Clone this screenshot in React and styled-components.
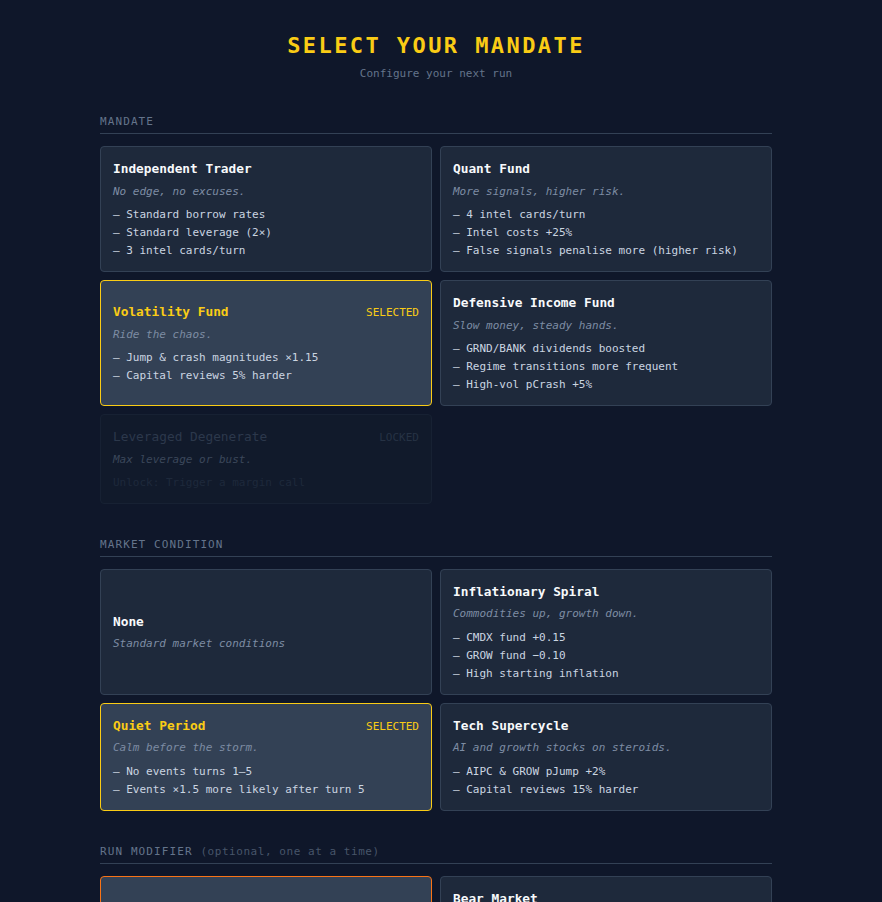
import React, { useState } from 'react';
import styled, { createGlobalStyle, css } from 'styled-components';

const GlobalStyle = createGlobalStyle`
  html, body {
    margin: 0;
    padding: 0;
    background-color: #0f172a;
  }
  body {
    font-family: "DejaVu Sans Mono", "Liberation Mono", monospace;
    color: #e2e8f0;
  }
`;

// the reference leaves a 10px gutter on the right (scrollbar track)
const Shell = styled.div`
  padding-right: 10px;
`;

const Page = styled.div`
  max-width: 672px;
  margin: 0 auto;
  padding: 33px 0 40px;
`;

const Header = styled.header`
  text-align: center;
  margin-bottom: 32px;
`;

const Title = styled.h1`
  margin: 0;
  font-size: 22px;
  line-height: 26px;
  font-weight: bold;
  letter-spacing: 0.11em;
  color: #facc15;
`;

const Subtitle = styled.p`
  margin: 6px 0 0;
  font-size: 11px;
  line-height: 17px;
  color: #64748b;
`;

const Section = styled.section`
  margin-bottom: 33px;
`;

const SectionLabel = styled.h2`
  margin: 0 0 12px;
  padding-bottom: 3px;
  border-bottom: 1px solid #334155;
  font-size: 11px;
  line-height: 16px;
  font-weight: normal;
  letter-spacing: 0.1em;
  color: #64748b;
`;

const Hint = styled.span`
  color: #475569;
  letter-spacing: 0.05em;
`;

const Grid = styled.div`
  display: grid;
  grid-template-columns: 1fr 1fr;
  gap: 8px;
`;

const accents = {
  yellow: '#facc15',
  orange: '#f97316',
};

const Card = styled.div`
  display: flex;
  flex-direction: column;
  justify-content: center;
  padding: 13px 12px 11px;
  border-radius: 4px;
  border: 1px solid #334155;
  background-color: #1e293b;
  cursor: pointer;

  ${(p) =>
    p.$selected &&
    css`
      background-color: #334155;
      border-color: ${accents[p.$accent]};
    `}

  ${(p) =>
    p.$locked &&
    css`
      background-color: #111a2b;
      border-color: #172133;
      cursor: default;
    `}
`;

const CardHead = styled.div`
  display: flex;
  justify-content: space-between;
  align-items: center;
`;

const CardTitle = styled.div`
  font-size: 12.8px;
  line-height: 18.5px;
  font-weight: bold;
  color: ${(p) => (p.$selected ? accents[p.$accent] : '#f8fafc')};

  ${(p) =>
    p.$locked &&
    css`
      font-weight: normal;
      color: #2c384b;
    `}
`;

const Tag = styled.span`
  font-size: 11px;
  color: ${(p) => (p.$locked ? '#263244' : accents[p.$accent])};
`;

const CardDesc = styled.div`
  margin-top: 4px;
  font-size: 11px;
  line-height: 17.6px;
  font-style: italic;
  color: ${(p) => (p.$locked ? '#3b475a' : '#7d8ca3')};
`;

const Perks = styled.ul`
  list-style: none;
  margin: 6px 0 0;
  padding: 0;
`;

const Perk = styled.li`
  font-size: 11px;
  line-height: 18px;
  color: #cbd5e1;
`;

const Unlock = styled.div`
  margin-top: 6px;
  font-size: 11px;
  line-height: 17.6px;
  color: #1e293b;
`;

const mandates = [
  {
    id: 'independent',
    name: 'Independent Trader',
    desc: 'No edge, no excuses.',
    perks: ['Standard borrow rates', 'Standard leverage (2×)', '3 intel cards/turn'],
  },
  {
    id: 'quant',
    name: 'Quant Fund',
    desc: 'More signals, higher risk.',
    perks: ['4 intel cards/turn', 'Intel costs +25%', 'False signals penalise more (higher risk)'],
  },
  {
    id: 'volatility',
    name: 'Volatility Fund',
    desc: 'Ride the chaos.',
    perks: ['Jump & crash magnitudes ×1.15', 'Capital reviews 5% harder'],
  },
  {
    id: 'defensive',
    name: 'Defensive Income Fund',
    desc: 'Slow money, steady hands.',
    perks: ['GRND/BANK dividends boosted', 'Regime transitions more frequent', 'High-vol pCrash +5%'],
  },
  {
    id: 'degenerate',
    name: 'Leveraged Degenerate',
    desc: 'Max leverage or bust.',
    locked: true,
    unlock: 'Unlock: Trigger a margin call',
  },
];

const conditions = [
  { id: 'none', name: 'None', desc: 'Standard market conditions', perks: [] },
  {
    id: 'inflation',
    name: 'Inflationary Spiral',
    desc: 'Commodities up, growth down.',
    perks: ['CMDX fund +0.15', 'GROW fund −0.10', 'High starting inflation'],
  },
  {
    id: 'quiet',
    name: 'Quiet Period',
    desc: 'Calm before the storm.',
    perks: ['No events turns 1–5', 'Events ×1.5 more likely after turn 5'],
  },
  {
    id: 'tech',
    name: 'Tech Supercycle',
    desc: 'AI and growth stocks on steroids.',
    perks: ['AIPC & GROW pJump +2%', 'Capital reviews 15% harder'],
  },
];

const modifiers = [
  { id: 'none', name: 'None', desc: 'No modifier this run', perks: [] },
  {
    id: 'bear',
    name: 'Bear Market',
    desc: 'Everything trends down.',
    perks: ['All drifts −0.05', 'Crash probability +3%', 'Starting cash +10%'],
  },
];

function OptionCard({ item, selected, accent, onSelect }) {
  const locked = item.locked;
  return (
    <Card
      $selected={selected}
      $locked={locked}
      $accent={accent}
      onClick={() => !locked && onSelect(item.id)}
    >
      <CardHead>
        <CardTitle $selected={selected} $locked={locked} $accent={accent}>
          {item.name}
        </CardTitle>
        {selected && <Tag $accent={accent}>SELECTED</Tag>}
        {locked && <Tag $locked>LOCKED</Tag>}
      </CardHead>
      <CardDesc $locked={locked}>{item.desc}</CardDesc>
      {locked ? (
        <Unlock>{item.unlock}</Unlock>
      ) : (
        item.perks.length > 0 && (
          <Perks>
            {item.perks.map((perk) => (
              <Perk key={perk}>— {perk}</Perk>
            ))}
          </Perks>
        )
      )}
    </Card>
  );
}

export default function App() {
  const [mandate, setMandate] = useState('volatility');
  const [condition, setCondition] = useState('quiet');
  const [modifier, setModifier] = useState('none');

  return (
    <Shell>
      <GlobalStyle />
      <Page>
        <Header>
          <Title>SELECT YOUR MANDATE</Title>
          <Subtitle>Configure your next run</Subtitle>
        </Header>

        <Section>
          <SectionLabel>MANDATE</SectionLabel>
          <Grid>
            {mandates.map((m) => (
              <OptionCard
                key={m.id}
                item={m}
                selected={mandate === m.id}
                accent="yellow"
                onSelect={setMandate}
              />
            ))}
          </Grid>
        </Section>

        <Section>
          <SectionLabel>MARKET CONDITION</SectionLabel>
          <Grid>
            {conditions.map((c) => (
              <OptionCard
                key={c.id}
                item={c}
                selected={condition === c.id}
                accent="yellow"
                onSelect={setCondition}
              />
            ))}
          </Grid>
        </Section>

        <Section>
          <SectionLabel>
            RUN MODIFIER <Hint>(optional, one at a time)</Hint>
          </SectionLabel>
          <Grid>
            {modifiers.map((r) => (
              <OptionCard
                key={r.id}
                item={r}
                selected={modifier === r.id}
                accent="orange"
                onSelect={setModifier}
              />
            ))}
          </Grid>
        </Section>
      </Page>
    </Shell>
  );
}
